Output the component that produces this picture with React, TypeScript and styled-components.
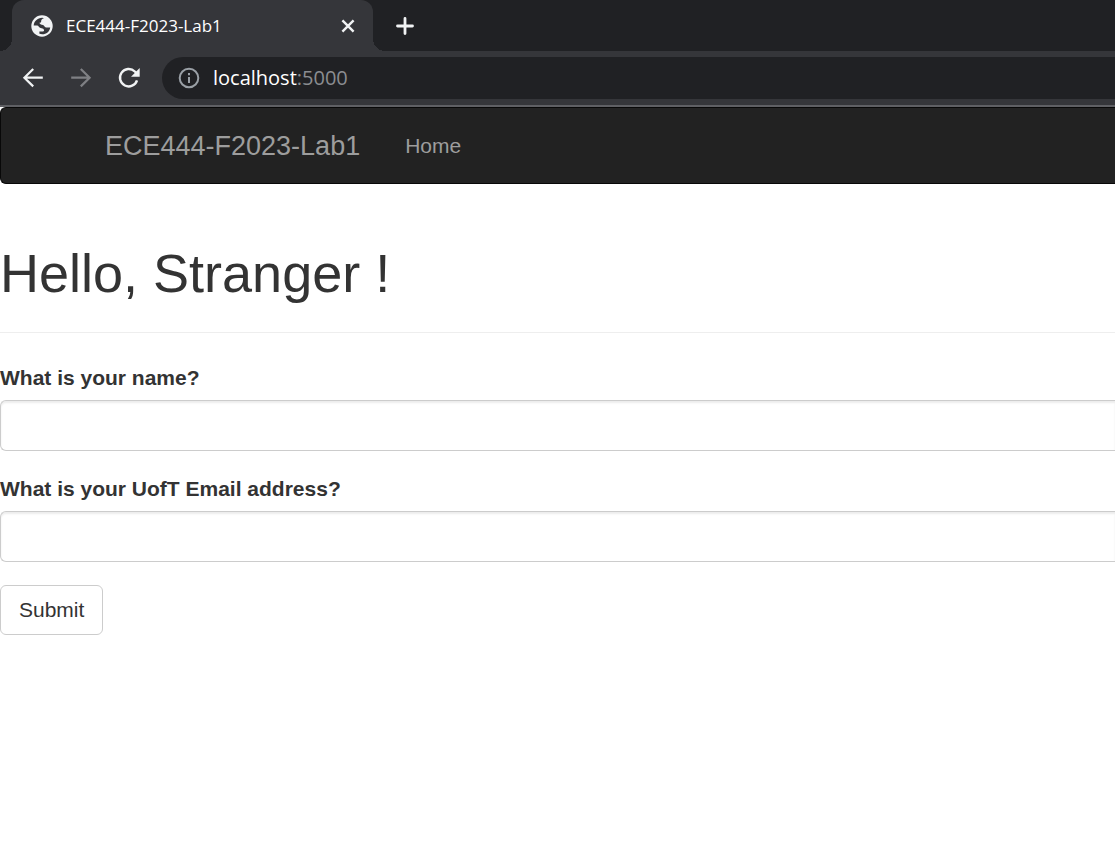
import React from "react";
import styled, { createGlobalStyle } from "styled-components";

const GlobalStyle = createGlobalStyle`
  *, *::before, *::after { box-sizing: border-box; }
  body {
    margin: 0;
    background: #fff;
    color: #333;
    font-family: "Liberation Sans", Arial, sans-serif;
    font-size: 21px;
    line-height: 30px;
  }
`;

const TabStrip = styled.div`
  display: flex;
  height: 51px;
  padding-left: 12px;
  background: #202124;
  overflow: hidden;
`;

const Tab = styled.div`
  position: relative;
  display: flex;
  align-items: center;
  gap: 13px;
  width: 361px;
  padding: 0 14px 0 19px;
  border-radius: 12px 12px 0 0;
  background: #35363a;
  color: #fff;
  font: 17px/24px "Open Sans", "Segoe UI", sans-serif;

  &::before,
  &::after {
    content: "";
    position: absolute;
    bottom: 0;
    width: 12px;
    height: 12px;
  }
  &::before {
    right: 100%;
    background: radial-gradient(circle at 0 0, transparent 12px, #35363a 12px);
  }
  &::after {
    left: 100%;
    background: radial-gradient(circle at 100% 0, transparent 12px, #35363a 12px);
  }
`;

const TabTitle = styled.span`
  flex: 1;
  white-space: nowrap;
`;

const IconButton = styled.button<{ $dim?: boolean }>`
  display: flex;
  padding: 0;
  border: 0;
  background: none;
  color: ${(p) => (p.$dim ? "#7f8084" : "#f1f3f4")};
`;

const NewTab = styled.div`
  display: flex;
  align-items: center;
  padding-left: 20px;
`;

const Toolbar = styled.div`
  display: flex;
  align-items: center;
  gap: 24px;
  height: 56px;
  border-bottom: 2px solid #5f6064;
  padding-left: 21px;
  background: #35363a;
`;

const AddressBar = styled.div`
  display: flex;
  flex: 1;
  align-items: center;
  gap: 13px;
  height: 42px;
  margin-left: -3px;
  padding-left: 16px;
  border-radius: 21px 0 0 21px;
  background: #202124;
  color: #9aa0a6;
`;

const Address = styled.span`
  color: #8b8d91;
  font: 20px/28px "Open Sans", "Segoe UI", sans-serif;

  b {
    color: #fff;
    font-weight: 400;
  }
`;

const Navbar = styled.nav`
  display: flex;
  align-items: center;
  gap: 45px;
  height: 77px;
  margin-bottom: 30px;
  padding-left: 104px;
  border: 1px solid #080808;
  border-right: 0;
  border-radius: 6px 0 0 6px;
  background: #222;
`;

const NavLink = styled.a<{ $brand?: boolean }>`
  color: #9d9d9d;
  font-size: ${(p) => (p.$brand ? "27px" : "21px")};
  text-decoration: none;
`;

const PageHeader = styled.header`
  padding: 29px 0;
  border-bottom: 1px solid #eee;
  margin-bottom: 30px;
`;

const Title = styled.h1`
  margin: 0;
  font-size: 54px;
  font-weight: 400;
  line-height: 60px;
`;

const Field = styled.div`
  display: flex;
  flex-direction: column;
  gap: 7px;
  margin-bottom: 23px;
`;

const Label = styled.label`
  font-weight: 700;
`;

const Input = styled.input`
  width: 100%;
  height: 51px;
  padding: 9px 18px;
  border: 1px solid #ccc;
  border-right: 0;
  border-radius: 6px 0 0 6px;
  box-shadow: inset 0 2px 2px rgba(0, 0, 0, 0.075);
  font: inherit;
`;

const SubmitButton = styled.button`
  height: 50px;
  padding: 0 18px;
  border: 1px solid #ccc;
  border-radius: 6px;
  background: #fff;
  color: #333;
  font: inherit;
`;

const stroke = { fill: "none", stroke: "currentColor" };

export default function App() {
  return (
    <>
      <GlobalStyle />
      <TabStrip>
        <Tab>
          <svg width="22" height="22" viewBox="0 0 22 22" aria-hidden="true">
            <circle cx="11" cy="11" r="10.7" fill="#f1f3f4" />
            <path
              fill="#35363a"
              d="M2.700 10.500C2.900 6.300 6.300 2.900 11.300 2.700L13 3.200C10.800 3.800 10.200 4.800 10.200 6.200C10.200 7.300 9.300 7.600 8.300 7.800C9 9.700 10.600 9.700 12 9.900C13.300 10.100 13.400 12.300 15 12.400H19.200C18.700 16.300 15.400 19.300 11.300 19.300C10.200 19.300 9.200 19.100 8.400 18.800V16.600H11.800C13 16.600 13.300 15.600 12.800 14.600C12.200 13.400 10.900 13.200 9.600 13C8 12.700 7.700 10.500 6 10.500Z"
            />
          </svg>
          <TabTitle>ECE444-F2023-Lab1</TabTitle>
          <IconButton aria-label="Close tab">
            <svg width="22" height="22" viewBox="0 0 22 22" {...stroke} strokeWidth="2.4">
              <path d="M5.400 5.400l11.200 11.200M16.600 5.400L5.400 16.600" />
            </svg>
          </IconButton>
        </Tab>
        <NewTab>
          <IconButton aria-label="New tab">
            <svg width="24" height="24" viewBox="0 0 24 24" {...stroke} strokeWidth="2.800" strokeLinecap="round">
              <path d="M12 4.500v15M4.500 12h15" />
            </svg>
          </IconButton>
        </NewTab>
      </TabStrip>
      <Toolbar>
        <IconButton aria-label="Back">
          <svg width="24" height="24" viewBox="0 0 24 24" {...stroke} strokeWidth="2.2">
            <path d="M21.800 11.700H3.500M12.200 3L3.400 11.700l8.800 8.700" />
          </svg>
        </IconButton>
        <IconButton aria-label="Forward" $dim>
          <svg width="24" height="24" viewBox="0 0 24 24" {...stroke} strokeWidth="2.2">
            <path d="M2.200 11.700h18.300M11.800 3l8.800 8.700-8.800 8.700" />
          </svg>
        </IconButton>
        <IconButton aria-label="Reload">
          <svg width="24" height="24" viewBox="0 0 24 24" {...stroke} strokeWidth="2.400">
            <path d="M20 14.300A8.700 8.700 0 1 1 17.800 5.500L19.500 7.200" />
            <path d="M22.700 2v8.700h-8.700z" fill="currentColor" stroke="none" />
          </svg>
        </IconButton>
        <AddressBar>
          <svg width="22" height="22" viewBox="0 0 22 22" {...stroke} strokeWidth="2">
            <circle cx="11" cy="11" r="9.300" />
            <path d="M11 10v6M11 6v2.200" />
          </svg>
          <Address>
            <b>localhost</b>:5000
          </Address>
        </AddressBar>
      </Toolbar>
      <Navbar>
        <NavLink href="#" $brand>
          ECE444-F2023-Lab1
        </NavLink>
        <NavLink href="#">Home</NavLink>
      </Navbar>
      <main>
        <PageHeader>
          <Title>Hello, Stranger !</Title>
        </PageHeader>
        <form>
          <Field>
            <Label htmlFor="name">What is your name?</Label>
            <Input id="name" type="text" />
          </Field>
          <Field>
            <Label htmlFor="email">What is your UofT Email address?</Label>
            <Input id="email" type="text" />
          </Field>
          <SubmitButton type="submit">Submit</SubmitButton>
        </form>
      </main>
    </>
  );
}
